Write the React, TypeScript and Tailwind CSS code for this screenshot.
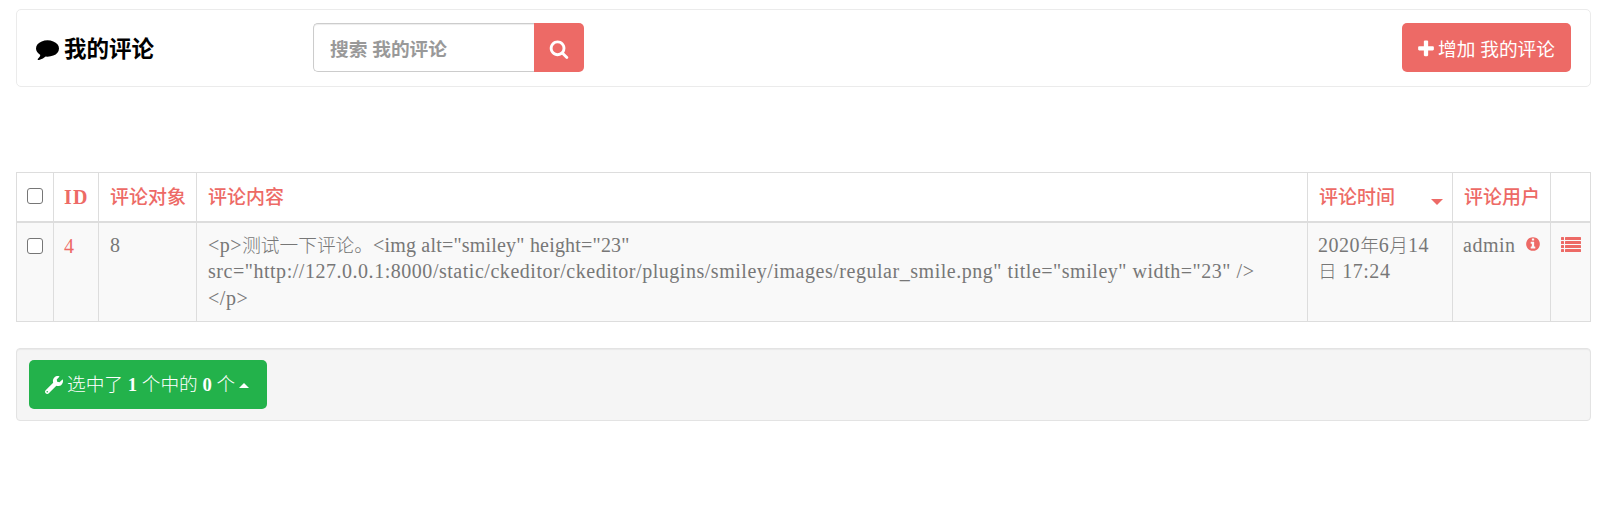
import React from "react";
import { FaWrench } from "react-icons/fa";

type IconProps = { className?: string };

const icon = (path: string) =>
  function Icon({ className }: IconProps) {
    return (
      <svg viewBox="0 0 1792 1792" fill="currentColor" className={className} aria-hidden="true">
        <path d={path} />
      </svg>
    );
  };

const CommentIcon = icon(
  "M1792 896q0 174-120 321.5t-326 233-450 85.5q-70 0-145-8-198 175-460 242-49 14-114 22h-5q-15 0-27-10.5t-16-27.5v-1q-3-4-.5-12t2-10 4.5-9.5l6-9 7-8.5 8-9q7-8 31-34.5t34.5-38 31-39.5 32.5-51 27-59 26-76q-157-89-247.5-220t-90.5-281q0-174 120-321.5t326-233 450-85.5 450 85.5 326 233 120 321.5z",
);
const SearchIcon = icon(
  "M1216 832q0-185-131.5-316.5t-316.5-131.5-316.5 131.5-131.5 316.5 131.5 316.5 316.5 131.5 316.5-131.5 131.5-316.5zm512 832q0 52-38 90t-90 38q-54 0-90-38l-343-342q-179 124-399 124-143 0-273.5-55.5t-225-150-150-225-55.5-273.5 55.5-273.5 150-225 225-150 273.5-55.5 273.5 55.5 225 150 150 225 55.5 273.5q0 220-124 399l343 343q37 37 37 90z",
);
const PlusIcon = icon(
  "M1600 736v192q0 40-28 68t-68 28h-416v416q0 40-28 68t-68 28h-192q-40 0-68-28t-28-68v-416h-416q-40 0-68-28t-28-68v-192q0-40 28-68t68-28h416v-416q0-40 28-68t68-28h192q40 0 68 28t28 68v416h416q40 0 68 28t28 68z",
);
const InfoIcon = icon(
  "M1152 1376v-160q0-14-9-23t-23-9h-96v-512q0-14-9-23t-23-9h-320q-14 0-23 9t-9 23v160q0 14 9 23t23 9h96v320h-96q-14 0-23 9t-9 23v160q0 14 9 23t23 9h448q14 0 23-9t9-23zm-128-896v-160q0-14-9-23t-23-9h-192q-14 0-23 9t-9 23v160q0 14 9 23t23 9h192q14 0 23-9t9-23zm640 416q0 209-103 385.5t-279.5 279.5-385.5 103-385.5-103-279.5-279.5-103-385.5 103-385.5 279.5-279.5 385.5-103 385.5 103 279.5 279.5 103 385.5z",
);

function ListIcon() {
  return (
    <svg viewBox="0 0 20 15" fill="currentColor" className="h-[15px] w-5" aria-hidden="true">
      {[0, 4, 8, 12].map((y) => (
        <g key={y}>
          <rect x="0" y={y} width="3" height="3" rx="0.5" />
          <rect x="4" y={y} width="16" height="3" rx="0.5" />
        </g>
      ))}
    </svg>
  );
}

function Checkbox() {
  return (
    <input
      type="checkbox"
      className="block h-4 w-4 appearance-none rounded-[3px] border border-[#767676] bg-white"
    />
  );
}

function Latin({ children, tight }: { children: React.ReactNode; tight?: boolean }) {
  return (
    <span className={tight ? "text-[20px] tracking-[0.2px]" : "text-[20px] tracking-[0.53px]"}>{children}</span>
  );
}

function Han({ children }: { children: React.ReactNode }) {
  return <span className="text-[18.7px] font-light">{children}</span>;
}

const cell = "border border-[#ddd] p-0 align-top";

export default function App() {
  return (
    <div className="h-[506px] overflow-hidden bg-white pl-4 pr-[9px] pt-[9px] font-[Georgia,'Liberation_Serif','Noto_Sans_CJK_SC',serif] text-[19px] text-[#777]">
      <header className="flex h-[78px] items-center rounded-[5px] border border-[#ebebeb] pb-[2px] pl-[19px] pr-[19px] font-['Open_Sans','Noto_Sans_CJK_SC',sans-serif]">
        <div className="flex w-[277px] items-center text-black">
          <CommentIcon className="mt-[2px] h-[23px] w-[23px]" />
          <h1 className="ml-[5px] mt-[4px] text-[22.5px] font-bold leading-none">我的评论</h1>
        </div>
        <div className="flex h-[49px] w-[271px]">
          <div className="flex w-[221px] items-center rounded-l-[5px] border border-r-0 border-[#ccc] pl-4 pt-[4px] text-[18.7px] font-bold text-[#999] shadow-[inset_0_1px_1px_rgba(0,0,0,0.075)]">
            搜索 我的评论
          </div>
          <button className="flex w-[50px] items-center justify-center rounded-r-[5px] bg-[#ed6a66] pt-[4px] text-white">
            <SearchIcon className="h-[20px] w-[20px]" />
          </button>
        </div>
        <button className="ml-auto flex h-[49px] w-[169px] items-center whitespace-nowrap rounded-[5px] bg-[#ed6a66] pl-[14px] text-[18.7px] text-white">
          <PlusIcon className="mt-[3px] h-[20px] w-[20px]" />
          <span className="ml-[2px] mt-[4px]">增加 我的评论</span>
        </button>
      </header>

      <table className="mt-[85px] w-[1575px] table-fixed border-collapse border border-[#ddd] leading-[26.5px]">
        <colgroup>
          <col className="w-[37px]" />
          <col className="w-[45px]" />
          <col className="w-[98px]" />
          <col className="w-[1111px]" />
          <col className="w-[145px]" />
          <col className="w-[98px]" />
          <col className="w-[40px]" />
        </colgroup>
        <thead>
          <tr className="h-[49px] text-left font-bold text-[#ed6a66]">
            <th className={`${cell} border-b-2`}>
              <div className="pl-[10px] pt-[15px]"><Checkbox /></div>
            </th>
            <th className={`${cell} border-b-2`}><div className="pl-[10px] pt-[11px] text-[20px] tracking-[1.2px]">ID</div></th>
            <th className={`${cell} border-b-2`}><div className="whitespace-nowrap pl-[11px] pt-[12px] font-medium">评论对象</div></th>
            <th className={`${cell} border-b-2`}><div className="pl-[11px] pt-[12px] font-medium">评论内容</div></th>
            <th className={`${cell} border-b-2`}>
              <div className="flex pl-[11px] pr-[9px] pt-[12px] font-medium">
                <span>评论时间</span>
                <svg viewBox="0 0 12 6" fill="currentColor" className="ml-auto mt-[14px] h-[6px] w-3"><path d="M0 0h12l-6 6z" /></svg>
              </div>
            </th>
            <th className={`${cell} border-b-2`}><div className="whitespace-nowrap pl-[11px] pt-[12px] font-medium">评论用户</div></th>
            <th className={`${cell} border-b-2`} />
          </tr>
        </thead>
        <tbody>
          <tr className="h-[100px] bg-[#f9f9f9]">
            <td className={cell}><div className="pl-[10px] pt-[15px]"><Checkbox /></div></td>
            <td className={cell}><div className="pl-[10px] pt-[10px] text-[#ed6a66]"><Latin>4</Latin></div></td>
            <td className={cell}><div className="pl-[11px] pt-[9px]"><Latin>8</Latin></div></td>
            <td className={cell}>
              <div className="whitespace-nowrap pl-[11px] pt-[9px]">
                <div className="h-[26.5px]"><Latin>{"<p>"}</Latin><Han>测试一下评论。</Han><Latin tight>{'<img alt="smiley" height="23"'}</Latin></div>
                <div className="h-[26.5px]"><Latin>{'src="http://127.0.0.1:8000/static/ckeditor/ckeditor/plugins/smiley/images/regular_smile.png" title="smiley" width="23" />'}</Latin></div>
                <div className="h-[26.5px]"><Latin>{"</p>"}</Latin></div>
              </div>
            </td>
            <td className={cell}>
              <div className="whitespace-nowrap pl-[10px] pt-[9px]">
                <div className="h-[26.5px]"><Latin>2020</Latin><Han>年</Han><Latin>6</Latin><Han>月</Han><Latin>14</Latin></div>
                <div className="h-[26.5px]"><Han>日</Han><Latin> 17:24</Latin></div>
              </div>
            </td>
            <td className={cell}>
              <div className="flex pl-[10px] pr-[9px] pt-[9px]">
                <Latin>admin</Latin>
                <InfoIcon className="ml-auto mt-[4px] h-4 w-4 text-[#ed6a66]" />
              </div>
            </td>
            <td className={cell}><div className="pl-[10px] pt-[14px] text-[#ed6a66]"><ListIcon /></div></td>
          </tr>
        </tbody>
      </table>

      <footer className="mt-[26px] flex h-[73px] rounded-[4px] border border-[#e3e3e3] bg-[#f5f5f5] pl-3 pt-[11px] shadow-[inset_0_1px_1px_rgba(0,0,0,0.05)]">
        <button className="flex h-[49px] w-[238px] items-center whitespace-nowrap rounded-[5px] bg-[#23b24b] pl-4 text-white">
          <FaWrench className="h-[18px] w-[18px]" />
          <span className="ml-[4px] mt-[2px] text-[18.7px]"><Han>选中了</Han> <b>1</b> <Han>个中的</Han> <b>0</b> <Han>个</Han></span>
          <svg viewBox="0 0 10 5" fill="currentColor" className="ml-1 mt-[2px] h-[5px] w-[10px]"><path d="M0 5h10l-5-5z" /></svg>
        </button>
      </footer>
    </div>
  );
}
